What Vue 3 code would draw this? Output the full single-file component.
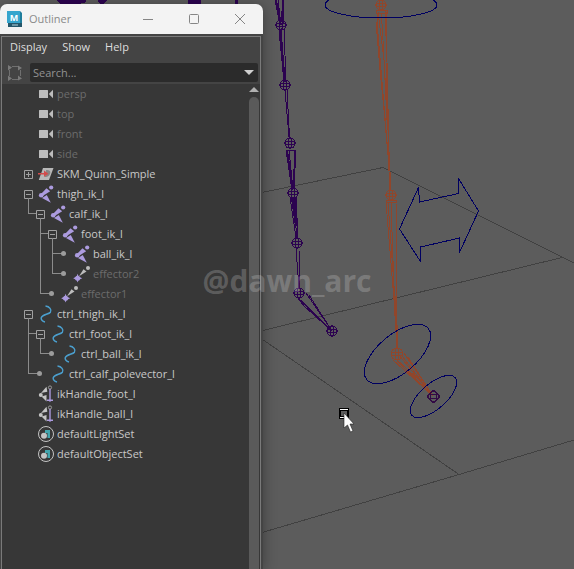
<script setup>
import { ref } from 'vue'

const query = ref('')
const menus = ['Display', 'Show', 'Help']

// guides: one entry per ancestor column; node: marker in front of the icon
const rows = [
  { name: 'persp', icon: 'camera', dim: true, guides: [], node: 'none' },
  { name: 'top', icon: 'camera', dim: true, guides: [], node: 'none' },
  { name: 'front', icon: 'camera', dim: true, guides: [], node: 'none' },
  { name: 'side', icon: 'camera', dim: true, guides: [], node: 'none' },
  { name: 'SKM_Quinn_Simple', icon: 'reference', guides: [], node: 'closed' },
  { name: 'thigh_ik_l', icon: 'joint', guides: [], node: 'open' },
  { name: 'calf_ik_l', icon: 'joint', guides: ['elbow'], node: 'open' },
  { name: 'foot_ik_l', icon: 'joint', guides: ['blank', 'tee'], node: 'open' },
  { name: 'ball_ik_l', icon: 'joint', guides: ['blank', 'line', 'tee'], node: 'leaf' },
  { name: 'effector2', icon: 'effector', dim: true, guides: ['blank', 'line', 'elbow'], node: 'leaf' },
  { name: 'effector1', icon: 'effector', dim: true, guides: ['blank', 'elbow'], node: 'leaf' },
  { name: 'ctrl_thigh_ik_l', icon: 'curve', guides: [], node: 'open' },
  { name: 'ctrl_foot_ik_l', icon: 'curve', guides: ['tee'], node: 'open' },
  { name: 'ctrl_ball_ik_l', icon: 'curve', guides: ['line', 'elbow'], node: 'leaf' },
  { name: 'ctrl_calf_polevector_l', icon: 'curve', guides: ['elbow'], node: 'leaf' },
  { name: 'ikHandle_foot_l', icon: 'handle', guides: [], node: 'none' },
  { name: 'ikHandle_ball_l', icon: 'handle', guides: [], node: 'none' },
  { name: 'defaultLightSet', icon: 'set', guides: [], node: 'none' },
  { name: 'defaultObjectSet', icon: 'set', guides: [], node: 'none' }
]

const purpleJoints = [
  [281, 25, 5], [285, 85, 5], [290, 143, 5], [293, 193, 5],
  [297, 243, 5], [299, 293, 5], [332, 331, 5]
]
const orangeJoints = [[381, 5, 5], [391, 195, 5], [397, 354, 6]]
</script>

<template>
  <main class="desktop">
    <svg class="scene" viewBox="0 0 574 569" preserveAspectRatio="xMinYMin slice" aria-hidden="true">
      <g class="floor">
        <path d="M240 197L383 167.5L574 263" />
        <path d="M240 336L562 257.5" />
        <path d="M240 324L459 474.5" />
        <path d="M240 539L459 474.5L574 440" />
      </g>

      <g class="rig-purple">
        <path class="solid" d="M57 0h28v2l-8 2h-16zM98 0h9l-3 3h-4zM188 0h12v4h-12zM235 0h2v4h-2z" />
        <path d="M275 0L280 25M278 0L281 25M282 0L282 25M284 0L283 25" />
        <path class="thick" d="M276 0L281 25M283 0L282 22" />
        <path d="M279 30L284 82M281 28L285 82M284 28L286 82" />
        <path class="thick" d="M280 30L285 82" />
        <path d="M285 90L289 137M287 90L289.500 137" />
        <path d="M286 150h9M286 147h8M286 150L292 190M289 150L293 190M295 150L294 190" />
        <path class="thick" d="M287 150L292 188M295 150L294 188" />
        <path d="M290 197L296 238M293 197L297 238M296 197L298 238" />
        <path class="thick" d="M292 198L296 226M295 198L296 226" />
        <path d="M296 249L299 288M299 249L299.500 288" />
        <path d="M298 298L332 331M301 300L332 331M306 293L332 331M309 295L332 331M298 298L304 306L332 331" />
        <g v-for="j in purpleJoints" :key="j[1]">
          <circle :cx="j[0]" :cy="j[1]" :r="j[2]" />
          <ellipse :cx="j[0]" :cy="j[1]" rx="6" ry="2" />
          <ellipse :cx="j[0]" :cy="j[1]" rx="2" ry="6" />
        </g>
      </g>

      <g class="rig-orange">
        <path d="M376 10h11v3h-11zM377 13v9L388 154M378 12L384 60L388 130M381 13L382.500 30L387 120M385 10L387 62L389 154M386 12v50L388 130" />
        <path d="M376 22L380 70L384 110L388 155M388 152L390 190M389 152L391 190" />
        <path d="M386 200h10v2h-10zM386 202L394 300M388 202L395 300M391 202L394 290M396 202L397 300" />
        <path d="M394 300L397 348M396 300L398 348M395 296L396 326M396 298L397 330" />
        <path d="M393 360L433 396M397 361L433 396M402 356L433 396M404 353L433 396M408 357L433 396M399 355L425 387M396 359L420 381" />
        <g v-for="j in orangeJoints" :key="j[1]">
          <circle :cx="j[0]" :cy="j[1]" :r="j[2]" />
          <ellipse :cx="j[0]" :cy="j[1]" rx="6" ry="2" />
          <ellipse :cx="j[0]" :cy="j[1]" rx="2" :ry="j[2]" />
        </g>
      </g>

      <g class="rig-tip">
        <circle cx="433.500" cy="396.500" r="5" />
        <ellipse cx="433.500" cy="396.500" rx="6" ry="2" />
        <ellipse cx="433.500" cy="396.500" rx="3" ry="6" />
      </g>

      <g class="controls">
        <ellipse cx="381" cy="5" rx="56" ry="13" />
        <ellipse cx="397.500" cy="354" rx="40" ry="19.500" transform="rotate(-40 397.500 354)" />
        <ellipse cx="433.500" cy="396.500" rx="28.700" ry="12.700" transform="rotate(-41 433.500 396.500)" />
        <path d="M399.500 229L418.500 187.500L419.500 202L458.500 193.500V178.500L478.500 211L459.500 252.500V238L420.500 247V261.500Z" />
      </g>

      <g class="pointer">
        <path d="M339 408h10v11h-10z" fill="#000" />
        <path d="M340 409h8v1h-8zM340 417h8v1h-8z" fill="#fff" />
        <path d="M341 411h6v5h-6z" fill="#5c5c5c" />
        <path d="M344 413V428L347.500 425L350.500 432L353 431L350 424H354Z" fill="#fff" stroke="#222" stroke-width=".6" />
      </g>
    </svg>

    <section class="window" aria-label="Outliner">
      <header class="titlebar">
        <svg class="logo" viewBox="0 0 16 17" aria-hidden="true">
          <path d="M1 0h12l2 2v13l-2 1H1z" fill="#1f7d9c" />
          <path d="M0 0h13v12H0z" fill="#36a5cd" />
          <path d="M1 12h14v4H1z" fill="#24566a" />
          <path d="M5 14h6" stroke="#b5d4df" stroke-width="1" />
          <text x="7" y="9.500" text-anchor="middle">M</text>
        </svg>
        <h1 class="title">Outliner</h1>
        <button class="chrome" type="button" aria-label="Minimize">
          <svg viewBox="0 0 12 12"><path d="M1 6.500h10" /></svg>
        </button>
        <button class="chrome" type="button" aria-label="Maximize">
          <svg viewBox="0 0 12 12"><rect x="1.500" y="1.500" width="9" height="9" rx="1" /></svg>
        </button>
        <button class="chrome" type="button" aria-label="Close">
          <svg viewBox="0 0 12 12"><path d="M1 1l10 10M11 1L1 11" /></svg>
        </button>
      </header>

      <div class="frame">
        <div class="panel">
          <nav class="menubar">
            <button v-for="m in menus" :key="m" type="button">{{ m }}</button>
          </nav>

          <div class="tools">
            <button class="fit" type="button" aria-label="Frame selection">
              <svg viewBox="0 0 16 16">
                <path d="M5 1.500h6M5 14.500h6M2.500 5v6M13.500 5v6" fill="none" stroke="#707070" />
                <path d="M1 0l4 2.500-4 3zM15 3l-4-2.500v5zM1 10.500l4 3-4 2.500zM15 13.500l-4-3v5z" fill="#7a7a7a" />
              </svg>
            </button>
            <div class="search">
              <input v-model="query" type="text" placeholder="Search..." aria-label="Search" />
              <button type="button" aria-label="Search options">
                <svg viewBox="0 0 10 6"><path d="M0 0h10L5 5z" fill="#d0d0d0" /></svg>
              </button>
            </div>
          </div>

          <div class="content">
            <ul class="tree">
              <li v-for="row in rows" :key="row.name" class="row">
                <span v-for="(g, i) in row.guides" :key="i" class="guide" :class="g"></span>
                <span class="node" :class="row.node">
                  <button
                    v-if="row.node === 'open' || row.node === 'closed'"
                    type="button"
                    class="toggle"
                    :aria-label="`Toggle ${row.name}`"
                  >
                    <svg viewBox="0 0 9 9">
                      <path d="M.5 .5h8v8h-8zM2 4.500h5" />
                      <path v-if="row.node === 'closed'" d="M4.500 2v5" />
                    </svg>
                  </button>
                </span>
                <svg class="icon" viewBox="0 0 16 16" aria-hidden="true">
                  <g v-if="row.icon === 'camera'" fill="#bdbdbd">
                    <rect x="1" y="4" width="9" height="8" rx=".6" />
                    <path d="M10.800 8L15 3.800v8.400z" />
                  </g>
                  <g v-else-if="row.icon === 'reference'">
                    <path d="M5 2h10.500L11 14H.8z" fill="#b8b8b8" />
                    <path d="M8 4c4 0 5 1.500 4 4s-3 3-6 3l2-2z" fill="#858585" />
                    <path d="M0 7h6V4.500l4.500 3.200-4.500 3V8.500H0z" fill="#d24b4b" />
                  </g>
                  <g v-else-if="row.icon === 'joint'" fill="#ac9bdf">
                    <circle cx="13.200" cy="1.500" r="2.100" />
                    <path d="M12.200 5.300L8.500 2.300 2.500 8.500l2.200 1.500z" />
                    <circle cx="3.200" cy="9.200" r="2.300" />
                    <path d="M4 12l4.800-3L12.800 16.800z" />
                  </g>
                  <g v-else-if="row.icon === 'effector'">
                    <circle cx="14" cy="2" r="2" fill="#bdbdbd" />
                    <path d="M12.500 5.500L9.500 3.300 5 10.200z" fill="#bdbdbd" />
                    <path d="M3.600 7.800l1 2.700 3.600 1.800-3.600 1.600-1 2.500-1-2.500-3.400-1.600 3.400-1.800z" fill="#ac9bdf" />
                    <circle cx="3.600" cy="12.200" r="2.500" fill="#ac9bdf" />
                  </g>
                  <path
                    v-else-if="row.icon === 'curve'"
                    d="M7.500 0C11.500 .5 14 3.800 12.400 6.200C10.800 8.400 4.500 8.500 3.300 11.500C2.600 13.500 4.500 15.500 7 16"
                    fill="none"
                    stroke="#4b9fce"
                    stroke-width="1.500"
                  />
                  <g v-else-if="row.icon === 'handle'">
                    <circle cx="2.800" cy="9" r="2" fill="#c4c4c4" />
                    <path d="M3 7L8.500 .8l.8 5z" fill="#c4c4c4" />
                    <path d="M3.500 10.500l5-1.500v6.500z" fill="#c4c4c4" />
                    <circle cx="12" cy="1.500" r="1.600" fill="none" stroke="#999" />
                    <path d="M12 3v12.800M9 14.300h6" stroke="#ac9bdf" stroke-width="1.400" />
                  </g>
                  <g v-else>
                    <circle cx="8" cy="8" r="7.500" fill="none" stroke="#c4c4c4" />
                    <path d="M7 4h5v8H9.500V7H7z" fill="#42a5ad" />
                    <circle cx="6" cy="9.700" r="3" fill="#c4c4c4" />
                  </g>
                </svg>
                <span class="label" :class="{ dim: row.dim }">{{ row.name }}</span>
              </li>
            </ul>
            <div class="scrollbar" aria-hidden="true">
              <svg viewBox="0 0 10 5"><path d="M5 0l5 5H0z" fill="#b0b0b0" /></svg>
              <div class="thumb"></div>
            </div>
          </div>
        </div>
      </div>
    </section>

    <p class="watermark">@dawn_arc</p>
  </main>
</template>

<style>
body {
  margin: 0;
  background: #5c5c5c;
}
</style>

<style scoped>
.desktop {
  position: relative;
  display: grid;
  grid-template-columns: 263fr 311fr;
  min-height: 100vh;
  overflow: hidden;
  background: #5c5c5c;
  font: 11px/16px "Open Sans", "Noto Sans", sans-serif;
  color: #c8c8c8;
}
.scene {
  position: absolute;
  inset: 0;
  width: 100%;
  height: 100%;
}
.scene g {
  fill: none;
  stroke-width: 1;
  shape-rendering: crispEdges;
}
.floor { stroke: #414141; }
.rig-purple { stroke: #2c0350; }
.rig-purple .solid { fill: #2c0350; }
.rig-purple .thick { stroke-width: 2; }
.rig-orange { stroke: #91462b; }
.rig-tip { stroke: #330b45; }
.controls { stroke: #000062; }
.scene .pointer { shape-rendering: auto; }

button {
  padding: 0;
  border: 0;
  background: none;
  font: inherit;
  color: inherit;
}
svg { display: block; }

.window {
  position: relative;
  display: flex;
  flex-direction: column;
  margin-top: 4px;
  border-radius: 7px 7px 0 0;
  overflow: hidden;
  box-shadow: 0 2px 14px rgba(0, 0, 0, 0.35);
}
.titlebar {
  display: flex;
  align-items: center;
  height: 30px;
  padding-left: 7px;
  background: #f3f3f3;
  color: #8a8a8a;
}
.logo {
  width: 16px;
  height: 17px;
}
.logo text {
  font: bold 9px "Open Sans", sans-serif;
  fill: #fff;
}
.title {
  flex: 1;
  margin: 0;
  padding-left: 6px;
  font-size: 11px;
  font-weight: 400;
}
.chrome {
  display: grid;
  place-items: center;
  width: 46px;
  height: 30px;
}
.chrome svg {
  width: 12px;
  height: 12px;
  fill: none;
  stroke: #858585;
}

.frame {
  flex: 1;
  display: flex;
  padding: 2px 2px 0 1px;
  background: #444;
}
.panel {
  flex: 1;
  display: flex;
  flex-direction: column;
  min-width: 0;
  border: solid #7a7a7a;
  border-width: 1px 1px 0;
}
.menubar {
  display: flex;
  gap: 15px;
  height: 20px;
  padding-left: 8px;
  color: #dedede;
}
.tools {
  display: flex;
  align-items: center;
  gap: 7px;
  padding: 6px 2px 2px 5px;
}
.fit svg {
  width: 16px;
  height: 16px;
}
.search {
  flex: 1;
  display: flex;
  align-items: center;
  min-width: 0;
  height: 19px;
  padding: 0 4px 0 3px;
  border-radius: 2px;
  background: #2b2b2b;
}
.search input {
  flex: 1;
  min-width: 0;
  padding: 0;
  border: 0;
  outline: 0;
  background: none;
  font: inherit;
  color: #c8c8c8;
}
.search input::placeholder {
  color: #929292;
  opacity: 1;
}
.search svg {
  width: 10px;
  height: 6px;
}

.content {
  flex: 1;
  display: flex;
  padding-left: 1px;
  background: #373737;
}
.tree {
  flex: 1;
  margin: 0;
  padding: 0 0 0 19px;
  list-style: none;
}
.row {
  display: flex;
  align-items: center;
  height: 20px;
}
.guide,
.node {
  position: relative;
  flex: none;
  width: 12px;
  height: 20px;
}
.guide::before {
  content: "";
  position: absolute;
  left: 6px;
  top: 0;
  height: 20px;
  border-left: 1px solid #8c8c8c;
}
.guide.blank::before { display: none; }
.guide.elbow::before { height: 10px; }
.guide.elbow::after,
.guide.tee::after {
  content: "";
  position: absolute;
  left: 6px;
  top: 9px;
  width: 8px;
  border-top: 1px solid #8c8c8c;
}
.node {
  display: grid;
  place-items: center;
}
.toggle svg {
  width: 9px;
  height: 9px;
  fill: none;
  stroke: #a0a0a0;
}
.open::after {
  content: "";
  position: absolute;
  left: 6px;
  top: 14px;
  height: 6px;
  border-left: 1px solid #8c8c8c;
}
.leaf::after {
  content: "";
  position: absolute;
  left: 3px;
  top: 7px;
  width: 5px;
  height: 5px;
  border-radius: 50%;
  background: #9c9c9c;
}
.leaf::before {
  content: "";
  position: absolute;
  left: 0;
  top: 9px;
  width: 4px;
  border-top: 1px solid #8c8c8c;
}
.icon {
  flex: none;
  width: 16px;
  height: 16px;
  margin: 0 3px 0 4px;
  overflow: visible;
}
.label { white-space: nowrap; }
.label.dim { color: #6c6c6c; }

.scrollbar {
  display: flex;
  flex-direction: column;
  align-items: center;
  gap: 5px;
  width: 12px;
  padding-top: 3px;
}
.scrollbar svg {
  width: 10px;
  height: 5px;
}
.thumb {
  flex: 1;
  width: 10px;
  border-radius: 5px 5px 0 0;
  background: #5a5a5a;
}

.watermark {
  position: absolute;
  inset: 0;
  display: grid;
  place-items: center;
  margin: 0;
  padding-bottom: 8px;
  font-size: 30px;
  font-weight: 700;
  line-height: 40px;
  color: rgba(255, 255, 255, 0.2);
  pointer-events: none;
}
</style>
